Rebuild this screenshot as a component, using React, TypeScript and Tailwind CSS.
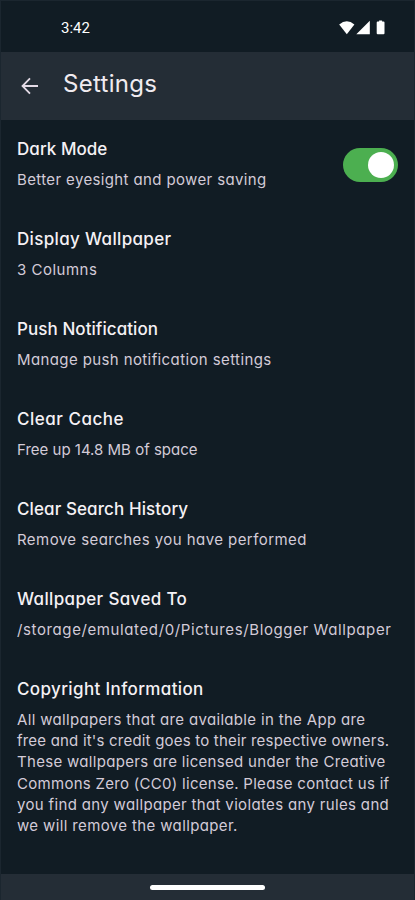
import clsx from "clsx";

type Setting = {
  title: string;
  titleClass: string;
  lines: { text: string; className: string }[];
  toggle?: boolean;
};

const settings: Setting[] = [
  {
    title: "Dark Mode",
    titleClass: "tracking-[0.05px]",
    lines: [{ text: "Better eyesight and power saving", className: "tracking-[0.37px]" }],
    toggle: true,
  },
  {
    title: "Display Wallpaper",
    titleClass: "tracking-[0.34px]",
    lines: [{ text: "3 Columns", className: "tracking-[0.5px]" }],
  },
  {
    title: "Push Notification",
    titleClass: "tracking-[0.07px]",
    lines: [{ text: "Manage push notification settings", className: "tracking-[0.39px]" }],
  },
  {
    title: "Clear Cache",
    titleClass: "tracking-[0.52px]",
    lines: [{ text: "Free up 14.8 MB of space", className: "tracking-[0px]" }],
  },
  {
    title: "Clear Search History",
    titleClass: "tracking-[0.1px]",
    lines: [{ text: "Remove searches you have performed", className: "tracking-[0.44px]" }],
  },
  {
    title: "Wallpaper Saved To",
    titleClass: "tracking-[0.35px]",
    lines: [{ text: "/storage/emulated/0/Pictures/Blogger Wallpaper", className: "tracking-[0.61px]" }],
  },
  {
    title: "Copyright Information",
    titleClass: "tracking-[0.37px]",
    lines: [
      { text: "All wallpapers that are available in the App are", className: "tracking-[0.33px]" },
      { text: "free and it's credit goes to their respective owners.", className: "tracking-[0.2px]" },
      { text: "These wallpapers are licensed under the Creative", className: "tracking-[0.31px]" },
      { text: "Commons Zero (CC0) license. Please contact us if", className: "tracking-[0.29px]" },
      { text: "you find any wallpaper that violates any rules and", className: "tracking-[0.34px]" },
      { text: "we will remove the wallpaper.", className: "tracking-[0.37px]" },
    ],
  },
];

export default function App() {
  return (
    <div className="flex h-[900px] w-[415px] flex-col overflow-hidden border-x border-t border-[#1b262f] bg-[#111c24] font-['Inter',sans-serif] [font-feature-settings:'cv11'_1]">
      <StatusBar />
      <AppBar />
      <main className="flex flex-1 flex-col pl-4">
        {settings.map((item) => (
          <SettingRow key={item.title} item={item} />
        ))}
      </main>
      <NavigationBar />
    </div>
  );
}

function StatusBar() {
  return (
    <div className="flex h-[51px] shrink-0 items-center justify-between pt-0.5 pr-[26px] pl-[60px]">
      <span className="pt-px font-['Roboto',sans-serif] text-[15px] text-white">3:42</span>
      <svg width="50" height="16" viewBox="0 0 50 16" fill="#fff">
        <path d="M1.2 4.5Q8.8-1.9 16.4 4.5L8.8 14.2Z" />
        <path d="M18.3 14.2H31.8V0.8Z" />
        <path d="M39.7 1.6h1.4V0.4h3v1.2h1.4q1 0 1 1v10.6q0 1-1 1h-5.8q-1 0-1-1v-10.6q0-1 1-1Z" />
      </svg>
    </div>
  );
}

function AppBar() {
  return (
    <header className="flex h-[68px] shrink-0 items-center bg-[#242d36] pl-5">
      <svg
        width="18"
        height="18"
        viewBox="0 0 18 18"
        fill="none"
        stroke="#e3dae6"
        strokeWidth="1.8"
      >
        <path d="M17 9H1.8M9 1.3L1.5 9L9 16.7" />
      </svg>
      <h1 className="ml-[24px] pb-1 text-2xl font-normal tracking-[0.28px] text-[#f0ebf0]">Settings</h1>
    </header>
  );
}

function SettingRow({ item }: { item: Setting }) {
  return (
    <section className="flex min-h-[90px] shrink-0 justify-between pt-[17px] pr-4">
      <div>
        <h2 className={clsx("text-[17px] leading-6 font-medium whitespace-nowrap text-[#f5f1f5]", item.titleClass)}>
          {item.title}
        </h2>
        <div className="mt-2 text-[15px] leading-[21.2px] whitespace-nowrap text-[#d3cbd8]">
          {item.lines.map((line) => (
            <p key={line.text} className={line.className}>
              {line.text}
            </p>
          ))}
        </div>
      </div>
      {item.toggle && <Toggle />}
    </section>
  );
}

function Toggle() {
  return (
    <button
      role="switch"
      aria-checked="true"
      aria-label="Dark Mode"
      className="mt-[11px] flex h-[34px] w-[55px] items-center justify-end rounded-full bg-[#4caf50] pr-1"
    >
      <span className="size-[26px] rounded-full bg-white" />
    </button>
  );
}

// Gesture handle at the bottom of the screen
function NavigationBar() {
  return (
    <div className="flex h-[26px] shrink-0 justify-center bg-[#242d36] pt-[11px]">
      <div className="h-[5px] w-[115px] rounded-full bg-white" />
    </div>
  );
}
